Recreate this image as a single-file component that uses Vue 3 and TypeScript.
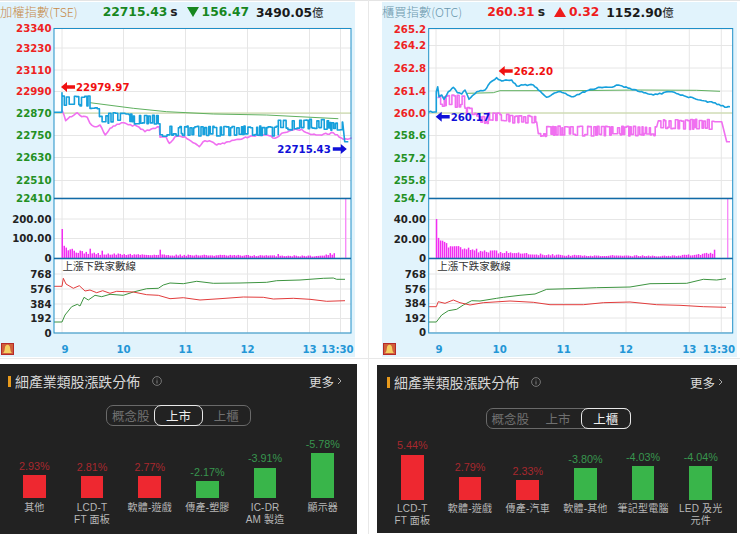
<script setup lang="ts">
type Pt = [number, number]
type Env = [number, number, number, number]

function rng(seed: number) {
  let s = seed
  return () => {
    s = (s * 16807) % 2147483647
    return s / 2147483647
  }
}
const line = (pts: Pt[], dx = 0) => pts.map(([x, y]) => `${((x + dx) / 3).toFixed(1)},${(y / 3).toFixed(1)}`).join(' ')

function jitter(pts: Pt[], seed: number, amp: number): Pt[] {
  const r = rng(seed)
  const out: Pt[] = []
  for (let i = 0; i < pts.length - 1; i++) {
    const [ax, ay] = pts[i]
    const [bx, by] = pts[i + 1]
    const n = Math.max(1, Math.round((bx - ax) / 6))
    for (let k = 0; k < n; k++) {
      const t = k / n
      out.push([ax + (bx - ax) * t, ay + (by - ay) * t + (k ? (r() - 0.5) * amp : 0)])
    }
  }
  out.push(pts[pts.length - 1])
  return out
}

function stepped(head: Pt[], envs: Env[], tail: Pt[], seed: number): Pt[] {
  const r = rng(seed)
  const out: Pt[] = [...head]
  for (const [x0, x1, top, bottom] of envs) {
    let x = x0
    let high = true
    while (x < x1) {
      const w = 2.5 + r() * 6
      const span = bottom - top
      const y = high ? top + r() * span * 0.18 : bottom - r() * span * 0.25
      out.push([x, y], [Math.min(x + w, x1), y])
      x += w
      high = r() > 0.3 ? !high : high
    }
  }
  return [...out, ...tail]
}

function bars(x0: number, x1: number, dx: number, heights: Pt[], spikes: Pt[], seed: number) {
  const r = rng(seed)
  const res: { x: number; h: number }[] = []
  for (let x = x0; x <= x1; x += 6) {
    let i = 0
    while (i < heights.length - 2 && heights[i + 1][0] < x) i++
    const [ax, ah] = heights[i]
    const [bx, bh] = heights[i + 1]
    let h = ah + ((bh - ah) * (x - ax)) / (bx - ax)
    h = h * (0.75 + r() * 0.5)
    const sp = spikes.find(s => Math.abs(s[0] - x) < 3)
    if (sp) h = sp[1]
    res.push({ x: +((x + dx) / 3).toFixed(1), h: +(h / 3).toFixed(1) })
  }
  return res
}

const charts = [
  {
    key: 'tse',
    title: '加權指數',
    code: '(TSE)',
    titleColor: 'tan',
    price: '22715.43',
    change: '156.47',
    volume: '3490.05',
    tone: 'down',
    dx: 0,
    plotX: 54,
    plotW: 297,
    labelX: 51.5,
    grid: [62, 123.5, 185.5, 247.5, 309.5, 340.5],
    ticks: [
      { t: '9', x: 65 }, { t: '10', x: 123.5 }, { t: '11', x: 185.5 },
      { t: '12', x: 247.5 }, { t: '13', x: 309.5 }, { t: '13:30', x: 337.5 }
    ],
    priceAxis: [
      ['23340', 28, 'r'], ['23230', 48, 'r'], ['23110', 70, 'r'], ['22990', 91.5, 'r'],
      ['22870', 113.5, 'g'], ['22750', 135.5, 'g'], ['22630', 157.5, 'g'], ['22510', 180.5, 'g'], ['22410', 198, 'g']
    ],
    volAxis: [['200.00', 219], ['100.00', 238.5], ['0', 258]],
    countAxis: [['768', 274], ['576', 289], ['384', 304], ['192', 318.5], ['0', 333]],
    ref: 112.5,
    blue: stepped(
      [[162, 337], [186, 337], [186, 278]],
      [[186, 270, 288, 318], [270, 300, 322, 350], [300, 326, 345, 372], [326, 378, 337, 368], [378, 400, 340, 370], [400, 480, 344, 372], [480, 510, 404, 410], [510, 835, 378, 408], [835, 990, 358, 390], [990, 1028, 366, 392]],
      [[1034, 425], [1045, 425]],
      77
    ),
    pink: jitter(
      [[186, 330], [192, 345], [197, 362], [205, 355], [215, 350], [232, 338], [245, 350], [262, 352], [270, 370], [285, 380], [300, 375], [316, 405], [330, 385], [345, 378], [365, 368], [385, 374], [410, 378], [435, 395], [460, 385], [478, 380], [480, 412], [498, 410], [508, 430], [525, 410], [555, 410], [598, 440], [615, 422], [635, 425], [650, 435], [690, 425], [730, 415], [760, 408], [800, 405], [825, 415], [845, 400], [880, 390], [905, 388], [925, 400], [960, 405], [1000, 398], [1030, 418], [1055, 413]],
      19, 5
    ),
    green: [[270, 308], [400, 325], [500, 335], [640, 342], [800, 345], [1015, 356]] as Pt[],
    upLine: [[162, 396], [186, 396], [195, 375], [215, 350], [232, 343], [240, 348], [252, 322], [265, 330], [285, 316], [305, 320], [330, 313], [370, 316], [400, 306], [440, 296], [475, 295], [490, 285], [510, 279], [550, 281], [590, 274], [640, 280], [720, 279], [800, 277], [830, 272], [900, 270], [970, 265], [1000, 264], [1010, 268], [1035, 268]] as Pt[],
    downLine: [[162, 289], [186, 289], [190, 265], [198, 282], [220, 295], [238, 287], [255, 303], [270, 300], [290, 308], [308, 302], [330, 310], [350, 304], [400, 306], [440, 314], [475, 316], [510, 326], [550, 323], [600, 330], [660, 326], [730, 321], [790, 322], [820, 327], [880, 325], [930, 328], [980, 334], [1035, 332]] as Pt[],
    bars: bars(186, 1005, 0, [[186, 60], [200, 28], [240, 18], [300, 12], [500, 9], [960, 6], [1005, 15]], [[186, 87], [270, 28], [306, 22], [480, 25], [836, 12], [880, 8]], 31),
    spike: 345,
    high: { text: '22979.97', x: 61, y: 87, color: '#f01010', dir: 'left' },
    low: { text: '22715.43', x: 277.300, y: 149, color: '#1010d8', dir: 'right' }
  },
  {
    key: 'otc',
    title: '櫃買指數',
    code: '(OTC)',
    titleColor: 'slate',
    price: '260.31',
    change: '0.32',
    volume: '1152.90',
    tone: 'up',
    dx: -36,
    plotX: 46.7,
    plotW: 304,
    labelX: 44,
    grid: [54, 117.7, 181.7, 244, 307.3, 339.3],
    ticks: [
      { t: '9', x: 57 }, { t: '10', x: 117.7 }, { t: '11', x: 181.7 },
      { t: '12', x: 244 }, { t: '13', x: 307.3 }, { t: '13:30', x: 337 }
    ],
    priceAxis: [
      ['265.2', 29, 'r'], ['264.2', 45.5, 'r'], ['262.8', 68, 'r'], ['261.4', 91, 'r'],
      ['260.0', 113, 'r'], ['258.6', 135.5, 'g'], ['257.2', 158, 'g'], ['255.8', 180.5, 'g'], ['254.7', 198, 'g']
    ],
    volAxis: [['40.00', 219.5], ['20.00', 239], ['0', 258]],
    countAxis: [['768', 274], ['576', 289], ['384', 303.5], ['192', 318], ['0', 332.5]],
    ref: 112.5,
    blue: jitter(
      [[176, 336], [199, 336], [199, 275], [203, 260], [207, 290], [215, 285], [222, 298], [235, 275], [250, 262], [262, 278], [275, 282], [285, 270], [297, 298], [320, 275], [345, 270], [360, 248], [380, 233], [395, 243], [425, 240], [440, 258], [460, 255], [490, 255], [505, 270], [530, 292], [565, 275], [610, 290], [650, 272], [690, 262], [720, 262], [745, 255], [780, 265], [810, 275], [850, 285], [900, 275], [950, 290], [990, 300], [1030, 308], [1070, 322], [1080, 320]],
      43, 4
    ),
    pink: stepped(
      [[205, 295]],
      [[205, 285, 285, 322], [285, 320, 322, 345], [320, 355, 346, 372], [355, 390, 337, 364], [390, 420, 340, 365], [420, 500, 346, 372], [505, 530, 400, 410], [530, 860, 378, 408], [865, 1030, 358, 390]],
      [[1035, 365], [1055, 365], [1070, 425], [1080, 425]],
      53
    ),
    green: [[290, 280], [370, 278], [390, 272], [600, 272], [800, 270], [980, 271], [1050, 274]] as Pt[],
    upLine: [[176, 396], [199, 396], [215, 375], [235, 362], [260, 358], [280, 345], [305, 332], [330, 333], [380, 325], [400, 322], [450, 316], [495, 312], [530, 298], [600, 296], [680, 293], [780, 291], [840, 281], [950, 280], [1000, 268], [1040, 270], [1068, 266]] as Pt[],
    downLine: [[176, 350], [199, 350], [205, 335], [225, 340], [250, 330], [270, 338], [300, 345], [340, 338], [420, 333], [490, 337], [540, 344], [640, 344], [700, 338], [780, 336], [860, 344], [930, 346], [1000, 350], [1068, 352]] as Pt[],
    bars: bars(199, 1035, -36, [[199, 55], [240, 36], [300, 24], [380, 18], [480, 12], [600, 8], [900, 6], [1035, 14]], [[199, 117], [1035, 25]], 67),
    spike: 345,
    high: { text: '262.20', x: 116.700, y: 71, color: '#f01010', dir: 'left' },
    low: { text: '260.17', x: 53.700, y: 116.700, color: '#1010d8', dir: 'left' }
  }
]

const boards = [
  {
    key: 'listed',
    active: 1,
    tabs: ['概念股', '上市', '上櫃'],
    items: [
      { pct: '2.93%', h: 23, up: true, label: ['其他'] },
      { pct: '2.81%', h: 22, up: true, label: ['LCD-T', 'FT 面板'] },
      { pct: '2.77%', h: 22, up: true, label: ['軟體-遊戲'] },
      { pct: '-2.17%', h: 17, up: false, label: ['傳產-塑膠'] },
      { pct: '-3.91%', h: 30.5, up: false, label: ['IC-DR', 'AM 製造'] },
      { pct: '-5.78%', h: 45, up: false, label: ['顯示器'] }
    ]
  },
  {
    key: 'otc',
    active: 2,
    tabs: ['概念股', '上市', '上櫃'],
    items: [
      { pct: '5.44%', h: 45, up: true, label: ['LCD-T', 'FT 面板'] },
      { pct: '2.79%', h: 23, up: true, label: ['軟體-遊戲'] },
      { pct: '2.33%', h: 19.5, up: true, label: ['傳產-汽車'] },
      { pct: '-3.80%', h: 31.5, up: false, label: ['軟體-其他'] },
      { pct: '-4.03%', h: 33.5, up: false, label: ['筆記型電腦'] },
      { pct: '-4.04%', h: 33.5, up: false, label: ['LED 及光', '元件'] }
    ]
  }
]
</script>

<template>
  <div class="page">
    <div class="top-row">
      <section v-for="c in charts" :key="c.key" class="chart-card" :class="c.key">
        <svg class="chart-svg" viewBox="0 0 355 356" width="355" height="356">
          <rect :x="c.plotX" y="28.5" :width="c.plotW" height="304.5" fill="#fff" />
          <g stroke="#e6e6e6" stroke-width="1">
            <line v-for="g in c.grid" :key="g" :x1="g" :x2="g" y1="29" y2="333" />
            <line v-for="a in c.priceAxis" :key="a[0]" :x1="c.plotX" :x2="c.plotX + c.plotW" :y1="a[1]" :y2="a[1]" />
            <line v-for="a in c.volAxis" :key="a[1]" :x1="c.plotX" :x2="c.plotX + c.plotW" :y1="a[1]" :y2="a[1]" />
            <line v-for="a in c.countAxis" :key="a[1]" :x1="c.plotX" :x2="c.plotX + c.plotW" :y1="a[1]" :y2="a[1]" />
          </g>
          <line :x1="c.plotX" :x2="c.plotX + c.plotW" :y1="c.ref + 0.5" :y2="c.ref + 0.5" stroke="#c4d69c" stroke-width="1" />
          <polyline :points="line(c.green, c.dx)" class="ln" stroke="#5fb05f" stroke-width="1" />
          <polyline :points="line(c.pink, c.dx)" class="ln" stroke="#f070f0" stroke-width="1.6" />
          <polyline :points="line(c.blue, c.dx)" class="ln" stroke="#16a0dc" stroke-width="1.6" />

          <g fill="#f22ef2">
            <rect v-for="b in c.bars" :key="b.x" :x="b.x - 0.5" :y="258 - b.h" width="1.5" :height="b.h" />
          </g>
          <rect :x="c.spike" y="199" width="1.4" height="59" fill="#f88cf8" />

          <polyline :points="line(c.upLine, c.dx)" class="ln shift" stroke="#3d9440" stroke-width="1" />
          <polyline :points="line(c.downLine, c.dx)" class="ln shift" stroke="#e23c3c" stroke-width="1" />
          <text :x="c.plotX + 8.5" y="270" class="sub-title">上漲下跌家數線</text>

          <rect :x="c.plotX" y="28.5" :width="c.plotW" height="304.5" fill="none" stroke="#1e8fc8" stroke-width="1" />
          <line :x1="c.plotX" :x2="c.plotX + c.plotW" y1="198.5" y2="198.5" stroke="#116ba8" stroke-width="1.4" />
          <line :x1="c.plotX" :x2="c.plotX + c.plotW" y1="258.5" y2="258.5" stroke="#116ba8" stroke-width="1.4" />

          <text v-for="a in c.priceAxis" :key="a[0]" :x="c.labelX" :y="a[1] + 3.8" class="axis" :class="a[2] === 'r' ? 'ax-red' : 'ax-green'">{{ a[0] }}</text>
          <text v-for="a in c.volAxis" :key="a[0]" :x="c.labelX" :y="a[1] + 3.8" class="axis ax-dark">{{ a[0] }}</text>
          <text v-for="a in c.countAxis" :key="a[0]" :x="c.labelX" :y="a[1] + 3.8" class="axis ax-dark">{{ a[0] }}</text>

          <text v-for="t in c.ticks" :key="t.t" :x="t.x" y="353" class="tick">{{ t.t }}</text>

          <g :fill="c.high.color">
            <path :d="`M${c.high.x} ${c.high.y}l6 -5v3.200h8v3.600h-8v3.200z`" />
            <text :x="c.high.x + 15" :y="c.high.y + 3.8" class="callout">{{ c.high.text }}</text>
          </g>
          <g :fill="c.low.color">
            <template v-if="c.low.dir === 'left'">
              <path :d="`M${c.low.x} ${c.low.y}l6 -5v3.200h8v3.600h-8v3.200z`" />
              <text :x="c.low.x + 15" :y="c.low.y + 3.8" class="callout">{{ c.low.text }}</text>
            </template>
            <template v-else>
              <text :x="c.low.x" :y="c.low.y + 3.8" class="callout">{{ c.low.text }}</text>
              <path :d="`M${c.low.x + 69.500} ${c.low.y}l-6 -5v3.200h-8v3.600h8v3.200z`" />
            </template>
          </g>

          <g transform="translate(1 343)">
            <rect width="13" height="12" fill="#b52a2a" />
            <rect x="1" y="1" width="11" height="10" fill="#d0603a" />
            <path d="M2 10c1.200-1 1.600-2.200 1.800-4.500C4 3 5 1.800 6.500 1.800S9 3 9.200 5.500C9.400 7.800 9.800 9 11 10z" fill="#f4cf62" />
          </g>
        </svg>
        <header class="chart-head">
          <span class="chart-title" :class="c.titleColor">{{ c.title }}{{ c.code }}</span>
          <span class="quote">
            <b :class="c.tone">{{ c.price }}</b><b class="s">s</b>
            <svg v-if="c.tone === 'down'" class="tri" width="12" height="10" viewBox="0 0 12 10"><path d="M0 0h12L6 10z" fill="#17871f" /></svg>
            <svg v-else class="tri" width="12" height="10" viewBox="0 0 12 10"><path d="M0 10h12L6 0z" fill="#ee1c1c" /></svg>
            <b class="change" :class="c.tone">{{ c.change }}</b>
            <b class="vol">{{ c.volume }}<i>億</i></b>
          </span>
        </header>
      </section>
    </div>

    <div class="bottom-row">
      <section v-for="b in boards" :key="b.key" class="board" :class="b.key">
        <header class="board-head">
          <span class="mark"></span>
          <h2>細產業類股漲跌分佈</h2>
          <svg class="info" width="10" height="10" viewBox="0 0 10 10">
            <circle cx="5" cy="5" r="4.400" fill="none" stroke="#8a8a8a" stroke-width=".8" />
            <path d="M5 2.600v.8M5 4.300v3.200" stroke="#8a8a8a" stroke-width=".9" />
          </svg>
          <span class="more">更多</span>
          <svg class="chev" width="5" height="8" viewBox="0 0 5 8">
            <path d="M1 1l3 3-3 3" fill="none" stroke="#a8a8a8" stroke-width="1" />
          </svg>
        </header>
        <div class="tabs">
          <span v-for="(t, i) in b.tabs" :key="t" class="tab" :class="{ on: i === b.active }">{{ t }}</span>
        </div>
        <div class="bars">
          <div v-for="it in b.items" :key="it.pct + it.label[0]" class="col">
            <div class="bar-wrap">
              <span class="pct" :class="it.up ? 'pct-up' : 'pct-down'">{{ it.pct }}</span>
              <span class="bar" :class="it.up ? 'bar-up' : 'bar-down'" :style="{ height: it.h + 'px' }"></span>
            </div>
            <div class="lab">
              <span v-for="l in it.label" :key="l">{{ l }}</span>
            </div>
          </div>
        </div>
      </section>
    </div>
  </div>
</template>

<style>
html, body { margin: 0; background: #fff; }
</style>

<style scoped>
.page {
  position: relative;
  width: 740px;
  height: 534px;
  overflow: hidden;
  background: #fff;
  font-family: "Noto Sans CJK TC", "DejaVu Sans", sans-serif;
}
.page::after {
  content: "";
  position: absolute;
  left: 368px;
  top: 0;
  width: 1px;
  height: 534px;
  background: #e8e8e8;
}
.top-row {
  display: flex;
  height: 359px;
  box-sizing: border-box;
  padding-top: 1px;
  border-top: 1px solid #e4e4e4;
  border-bottom: 1px solid #e8e8e8;
}
.chart-card {
  position: relative;
  width: 355px;
  height: 355px;
  background: #e1f3fc;
  overflow: hidden;
}
.chart-card.otc { margin-left: 27px; }
.chart-head {
  position: relative;
  height: 20px;
  display: flex;
  align-items: center;
}
.chart-title {
  font-size: 12.300px;
  font-weight: 300;
  line-height: 18px;
  white-space: nowrap;
}
.chart-title.tan { color: #c68a48; }
.chart-title.slate { color: #6a97ad; }
.quote {
  font-family: "DejaVu Sans", sans-serif;
  font-size: 12.300px;
  white-space: nowrap;
  display: flex;
  align-items: center;
  margin-left: 25px;
}
.quote b { font-weight: 700; }
.quote .down { color: #17871f; }
.quote .up { color: #ee1c1c; }
.quote .s { color: #222; margin-left: 3px; }
.tri { margin-left: 9px; margin-right: 3px; }
.quote .vol { color: #1a1a1a; margin-left: 7px; }
.quote .vol i {
  font-family: "Noto Sans CJK TC", sans-serif;
  font-style: normal;
  font-weight: 400;
  font-size: 11.500px;
}
.chart-svg {
  display: block;
  position: absolute;
  left: 0;
  top: -2px;
}
.ln { fill: none; stroke-linejoin: round; }
.shift { transform: translateY(190px); }
.axis {
  font-family: "DejaVu Sans", sans-serif;
  font-weight: 700;
  font-size: 10.200px;
  text-anchor: end;
}
.ax-red { fill: #ee2222; }
.ax-green { fill: #239023; }
.ax-dark { fill: #222; }
.tick {
  font-family: "DejaVu Sans", sans-serif;
  font-weight: 700;
  font-size: 10.200px;
  fill: #2496d6;
  text-anchor: middle;
}
.callout {
  font-family: "DejaVu Sans", sans-serif;
  font-weight: 700;
  font-size: 10.200px;
}
.sub-title {
  font-family: "Noto Sans CJK TC", sans-serif;
  font-size: 10.500px;
  fill: #333;
}
.bottom-row {
  display: flex;
  margin-top: 5px;
}
.board {
  background: #222;
  color: #ddd;
  height: 170px;
  box-sizing: border-box;
  overflow: hidden;
}
.board.listed { width: 357px; padding: 0; }
.board.otc { width: 360px; margin-left: 20px; margin-top: 1px; height: 168px; }
.board-head {
  height: 34px;
  display: flex;
  align-items: center;
}
.listed .board-head { padding-left: 8px; }
.otc .board-head { padding-left: 10px; padding-top: 0; }
.mark {
  width: 2.500px;
  height: 11px;
  background: #e89a1c;
  margin-right: 4.500px;
}
.board-head h2 {
  margin: 0;
  font-size: 13.900px;
  font-weight: 400;
  color: #d8d8d8;
  white-space: nowrap;
  width: 132px;
}
.info { margin-left: 5px; }
.more {
  margin-left: auto;
  font-size: 12.500px;
  color: #ddd;
}
.chev { margin-left: 3px; margin-right: 15px; }
.otc .chev { margin-right: 14px; }
.tabs {
  display: flex;
  box-sizing: border-box;
  height: 21px;
  border: 1px solid #6a6a6a;
  border-radius: 7px;
  width: 145px;
  margin-top: 7px;
}
.listed .tabs { margin-left: 106px; }
.otc .tabs { margin-left: 108.500px; margin-top: 8.500px; }
.tab {
  flex: 1;
  margin: -1px;
  border: 1px solid transparent;
  border-radius: 7px;
  text-align: center;
  font-size: 12.500px;
  line-height: 19px;
  color: #707070;
}
.tab.on {
  border-color: #e8e8e8;
  color: #eee;
}
.bars {
  display: flex;
  position: relative;
}
.listed .bars { margin: 0 5.500px; height: 108px; }
.otc .bars { margin: 0 6.500px; height: 103px; }
.col {
  width: 57.700px;
  flex: none;
  display: flex;
  flex-direction: column;
  align-items: center;
}
.bar-wrap {
  height: 72px;
  display: flex;
  flex-direction: column;
  justify-content: flex-end;
  align-items: center;
  flex: none;
}
.otc .bar-wrap { height: 71px; }
.pct {
  font-family: "Liberation Sans", sans-serif;
  font-size: 10.800px;
  line-height: 13px;
  margin-bottom: 2.500px;
}
.pct-up { color: #a8282e; }
.pct-down { color: #38964e; }
.bar { width: 22.600px; display: block; }
.bar-up { background: #ee2830; }
.bar-down { background: #39b54a; }
.lab {
  margin-top: 3.500px;
  display: flex;
  flex-direction: column;
  align-items: center;
  font-family: "Liberation Sans", "Noto Sans CJK TC", sans-serif;
  font-size: 10px;
  line-height: 12px;
  letter-spacing: 0.2px;
  color: #b8b8b8;
  white-space: nowrap;
}
</style>
